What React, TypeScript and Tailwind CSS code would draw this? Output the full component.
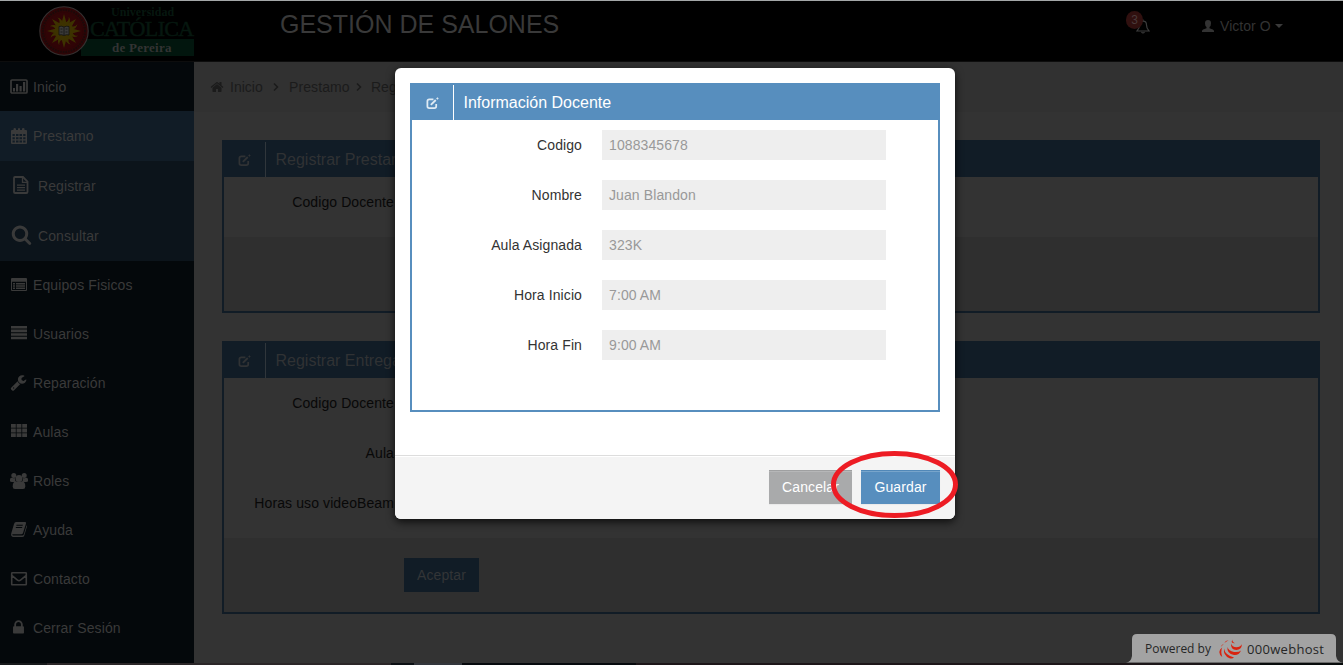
import type { ReactNode } from "react";

const P = {
  home: "M1472 992v480q0 26-19 45t-45 19h-384v-384h-256v384h-384q-26 0-45-19t-19-45v-480q0-1 .5-3t.5-3l575-474 575 474q1 2 1 6zm223-69l-62 74q-8 9-21 11h-3q-13 0-21-7l-692-577-692 577q-12 8-24 7-13-2-21-11l-62-74q-8-10-7-23.5t11-21.5l719-599q32-26 76-26t76 26l244 204v-195q0-14 9-23t23-9h192q14 0 23 9t9 23v408l219 182q10 8 11 21.5t-7 23.5z",
  search: "M1216 832q0-185-131.5-316.5t-316.5-131.5-316.5 131.5-131.5 316.5 131.5 316.5 316.5 131.5 316.5-131.5 131.5-316.5zm512 832q0 52-38 90t-90 38q-54 0-90-38l-343-342q-179 124-399 124-143 0-273.5-55.5t-225-150-150-225-55.5-273.5 55.5-273.5 150-225 225-150 273.5-55.5 273.5 55.5 225 150 150 225 55.5 273.5q0 220-124 399l343 343q37 37 37 90z",
  wrench: "M448 1472q0-26-19-45t-45-19-45 19-19 45 19 45 45 19 45-19 19-45zm644-420l-682 682q-37 37-90 37-52 0-91-37l-106-108q-38-36-38-90 0-53 38-91l681-681q39 98 114.5 173.5t173.5 114.5zm634-435q0 39-23 106-47 134-164.5 217.5t-258.5 83.5q-185 0-316.5-131.5t-131.5-316.5 131.5-316.5 316.5-131.5q58 0 121.5 16.5t107.5 46.5q16 11 16 28t-16 28l-293 169v224l193 107q5-3 79-48.5t135.5-81 70.5-35.5q15 0 23.5 10t8.5 25z",
  lock: "M640 768h512v-192q0-106-75-181t-181-75-181 75-75 181v192zm832 96v576q0 40-28 68t-68 28h-960q-40 0-68-28t-28-68v-576q0-40 28-68t68-28h32v-192q0-184 132-316t316-132 316 132 132 316v192h32q40 0 68 28t28 68z",
};

function Fa({ d, className }: { d: string; className: string }) {
  return (
    <svg viewBox="0 0 1792 1792" fill="currentColor" className={className}>
      <path d={d} />
    </svg>
  );
}

function Icon({ children, className = "w-[18px] h-4" }: { children: ReactNode; className?: string }) {
  return (
    <svg viewBox="0 0 18 16" fill="currentColor" className={className}>
      {children}
    </svg>
  );
}

const barChart = (
  <Icon>
    <rect x="1" y="1" width="16" height="13" rx="1" fill="none" stroke="currentColor" strokeWidth="1.700" />
    <path d="M3 9h2v3.500H3zM6 5h2.200v7.500H6zM9.500 7h2.200v5.500H9.500zM13 3h2.200v9.500H13z" />
  </Icon>
);
const calendar = (
  <Icon>
    <path
      fillRule="evenodd"
      d="M2 2h1.500V1Q3.500 0 4.700 0T6 1v1h2V1q0-1 1-1t1 1v1h2V1q0-1 1.300-1t1.200 1v1H16q1 0 1 1v12q0 1-1 1H2q-1 0-1-1V3q0-1 1-1zM2.500 6v2h2.300V6zm3.500 0v2h2.500V6zm3.500 0v2H12V6zm3.700 0v2h2.300V6zM2.500 9.300v2h2.300v-2zm3.500 0v2h2.500v-2zm3.500 0v2H12v-2zm3.700 0v2h2.300v-2zM2.500 12.500v2h2.300v-2zm3.500 0v2h2.500v-2zm3.500 0v2H12v-2zm3.700 0v2h2.300v-2z"
    />
  </Icon>
);
const fileText = (
  <svg viewBox="0 0 16 18" className="w-4 h-[18px] ml-[3px]" fill="none" stroke="currentColor" strokeWidth="1.800">
    <path d="M2 1h8l4.500 4.500V16q0 1-1 1H2q-1 0-1-1V2q0-1 1-1z" />
    <path d="M9.500 1v5.300h5M4 9.200h8M4 11.700h8M4 14.100h8" strokeWidth="1.300" />
  </svg>
);
const listAlt = (
  <Icon>
    <path fillRule="evenodd" d="M2 1h14q1 0 1 1v11q0 1-1 1H2q-1 0-1-1V2q0-1 1-1zm0 3.800V13h14V4.800zM3 6h2v1.400H3zm3 0h9v1.400H6zM3 8.300h2v1.400H3zm3 0h9v1.400H6zM3 10.600h2V12H3zm3 0h9V12H6z" />
  </Icon>
);
const justify = (
  <Icon>
    <path d="M1 0h16v2.600H1zM1 3.600h16v2.600H1zM1 7.200h16v2.600H1zM1 10.800h16v2.400H1z" />
  </Icon>
);
const grid = (
  <Icon>
    <path d="M1 0h4.800v3.800H1zM6.600 0h4.800v3.800H6.600zM12.200 0H17v3.800h-4.800zM1 4.600h4.800v3.800H1zM6.600 4.600h4.800v3.800H6.600zM12.200 4.600H17v3.800h-4.800zM1 9.200h4.800V13H1zM6.600 9.200h4.800V13H6.600zM12.200 9.200H17V13h-4.800z" />
  </Icon>
);
const users = (
  <Icon>
    <circle cx="3.800" cy="2.500" r="2.500" />
    <circle cx="14.200" cy="2.500" r="2.500" />
    <circle cx="9" cy="5.500" r="3.500" />
    <path d="M0 8V6.500Q0 4.800 1.500 4.800q2.300.8 3.500.2-.3 2.400 1 4H2Q0 9 0 8z" />
    <path d="M18 8V6.500q0-1.700-1.500-1.700-2.300.8-3.500.2.300 2.400-1 4h4q2 0 2-1z" />
    <path d="M5.800 8.500h6.400q3.100 0 3.100 5 0 2.500-2.300 2.500H5q-2.300 0-2.300-2.500 0-5 3.100-5z" />
  </Icon>
);
const book = (
  <Icon>
    <path
      fillRule="evenodd"
      d="M6 0h9q1.400 0 1 1.400l-3 9.600q-.4 1.300-1.800 1.300H2.800q-.6 0-.6.500.2.800 1.200.8h8.800q1.300 0 1.700-1.300l2.700-9q.6.600.3 1.500l-2.600 8.700Q13.800 15 12.200 15H3.400Q.6 15 1.200 11.600L4 2q.6-2 2-2zm.6 2.700-.3 1h6.300l.3-1zM6 5.100l-.3 1H12l.3-1z"
    />
  </Icon>
);
const envelope = (
  <Icon>
    <path d="M2.300 1.800h13.400q.6 0 .6.600v10.800q0 .6-.6.600H2.300q-.6 0-.6-.6V2.400q0-.6.600-.6zM1.800 4.400l5.700 4.700q1.500 1.200 3 0l5.700-4.700" fill="none" stroke="currentColor" strokeWidth="1.600" />
  </Icon>
);

function Edit({ className }: { className: string }) {
  return (
    <svg viewBox="0 0 14 14" fill="none" stroke="currentColor" className={className}>
      <path d="M8 2.500H3.500q-2 0-2 2v5.500q0 2 2 2h5.500q2 0 2-2V7.500" strokeWidth="1.900" />
      <path d="M5.200 8.500l5.300-5.300" strokeWidth="2" />
      <path d="M11.600 2.300l1.400-1.400" strokeWidth="1.900" />
    </svg>
  );
}

function Logo() {
  const rays = Array.from({ length: 16 }, (_, i) => i * 22.5);
  return (
    <div className="flex w-[155px] h-[50px] ml-[39px] mt-[5px] shrink-0">
      <svg viewBox="0 0 50 50" className="relative z-10 w-[50px] h-[50px] shrink-0">
        <circle cx="25" cy="25" r="24.200" fill="#2d0506" stroke="#363030" strokeWidth="1.100" />
        <circle cx="25" cy="25" r="21" fill="none" stroke="#1a0a0a" strokeWidth="2" strokeDasharray="1.500 1.200" />
        <circle cx="25" cy="25" r="18.500" fill="#300406" />
        {rays.map((r, i) => (
          <path key={r} d={i % 2 ? "M23 17Q26 14 24 10Q28 13 27 18z" : "M22.500 17L25 8L27.500 17z"} fill="#3d3200" transform={`rotate(${r} 25 25)`} />
        ))}
        <circle cx="25" cy="25" r="9.500" fill="#3d3200" />
        <path d="M20 20.500q2.500-.8 5 .5 2.500-1.300 5-.5v8.500q-2.500-.8-5 .5-2.500-1.300-5-.5z" fill="#3a3a38" stroke="#111" strokeWidth=".8" />
        <path d="M25 21v8M21.500 23h2M21.500 26h2M26.500 23h2M26.500 26h2" stroke="#111" strokeWidth=".8" />
      </svg>
      <div className="flex flex-col w-[105px] font-['Liberation_Serif',serif] text-[#06170f] whitespace-nowrap">
        <span className="h-[12px] pl-[22px] text-[12px] leading-[12px] font-bold tracking-[0.05px]">Universidad</span>
        <span className="h-[21px] pl-px text-[22px] leading-[21px] tracking-[-0.65px] [-webkit-text-stroke:0.5px_#06170f]">CATÓLICA</span>
        <span className="h-[17px] -ml-2 pl-[31px] bg-[#02160e] text-[#333] text-[13px] leading-[17px] font-bold tracking-[0.25px]">de Pereira</span>
      </div>
    </div>
  );
}

function Item({ icon, label, className = "h-[49px]" }: { icon: ReactNode; label: string; className?: string }) {
  return (
    <a className={`flex items-center pl-[10px] shrink-0 ${className}`}>
      <span className="w-[23px] flex">{icon}</span>
      <span>{label}</span>
    </a>
  );
}

function PanelHead({ title }: { title: string }) {
  return (
    <div className="flex h-[35px] text-base bg-[#111c26] text-[#303234]">
      <span className="w-[42px] border-r border-[#30363b] flex items-center justify-center shrink-0 pt-[2px]">
        <Edit className="w-[13px] h-[13px]" />
      </span>
      <span className="pl-[9.500px] leading-[34px] pt-px">{title}</span>
    </div>
  );
}

function Label({ children }: { children: ReactNode }) {
  return <div className="h-[50px] w-[170px] pt-[5px] leading-10 text-right text-[#080808] whitespace-nowrap tracking-[0.1px]">{children}</div>;
}

const fields = [
  ["Codigo", "1088345678"],
  ["Nombre", "Juan Blandon"],
  ["Aula Asignada", "323K"],
  ["Hora Inicio", "7:00 AM"],
  ["Hora Fin", "9:00 AM"],
];

function Modal() {
  return (
    <div className="absolute z-20 left-[395px] top-[68px] w-[560px] h-[451px] rounded-[6px] bg-white shadow-[0_3px_9px_rgba(0,0,0,0.75)] flex flex-col">
      <div className="h-[387px] p-[15px]">
        <div className="h-[329px] border-2 border-[#578ebe]">
          <div className="flex h-[35px] bg-[#578ebe] text-white text-base">
            <span className="w-[42px] border-r border-white flex items-center justify-center text-[#dfebf4] pt-[2px]">
              <Edit className="w-[13px] h-[13px]" />
            </span>
            <span className="pl-[9.500px] leading-[34px] pt-px">Información Docente</span>
          </div>
          <div className="flex flex-col gap-5 pt-[10px]">
            {fields.map(([k, v]) => (
              <div key={k} className="flex h-[30px] leading-[30px] tracking-[0.1px]">
                <label className="w-[170px] text-right text-[#333]">{k}</label>
                <div className="ml-5 w-[284px] bg-[#eee] pl-[7px] text-[#999]">{v}</div>
              </div>
            ))}
          </div>
        </div>
      </div>
      <div className="flex-1 border-t border-[#ddd] bg-[#f4f4f4] rounded-b-[6px] shadow-[inset_0_1px_0_#fff] flex justify-end gap-[9px] pr-[15px] pt-[14px] text-white leading-[34px] text-center tracking-[0.1px]">
        <button className="w-[83px] h-[34px] bg-[#a9aaab] shadow-[inset_0_1px_0_#9fa0a1,inset_0_2px_0_#b6b7b8,0_1px_1px_#eaeaea]">Cancelar</button>
        <button className="w-[79px] h-[34px] bg-[#578ebe] shadow-[inset_0_1px_0_#5188b8,inset_0_2px_0_#78a5cb,0_1px_1px_#eaeaea]">Guardar</button>
      </div>
      <svg viewBox="0 0 128 70" className="absolute left-[435px] top-[381px] w-[128px] h-[70px]">
        <ellipse cx="64.500" cy="35.500" rx="61" ry="31" fill="none" stroke="#ed1c24" strokeWidth="5" />
      </svg>
    </div>
  );
}

function HostBadge() {
  return (
    <div className="absolute left-[1126px] top-[634px] w-[217px] h-[29px] font-['Open_Sans',sans-serif]">
      <svg viewBox="0 0 217 29" className="absolute inset-0 w-[217px] h-[29px]">
        <path d="M0 28.500Q5 28 6 22V5q0-5 5-5h194q5 0 5 5v17q1 6 7 6.500z" fill="#a3a3a3" />
      </svg>
      <div className="relative flex items-center h-[29px] pl-[19px] text-[#262626] whitespace-nowrap">
        <span className="text-[12px] w-[74px]">Powered by</span>
        <svg viewBox="0 0 24 20" className="w-6 h-5" fill="#d9230f">
          <path d="M12 4.500q1 3.500 5.500 3.700 3.500 0 5.500-3-.5 5.600-5.700 5.800Q11.500 10.500 12 4.500z" />
          <path d="M8.500 8q1 4 6.500 5 5 .5 7-1.500-2 5-7 4.500Q7.500 14.500 8.500 8z" />
          <path d="M5 9.500q1 6.500 10 9-1.500 1.500-4.500.7Q4 16.500 5 9.500z" />
          <path d="M3.200 8.500Q1.500 12 3.200 18 .5 16.500.3 13 .500 10 3.200 8.500zM13.500.5q-.7 2.300 2.500 3.800Q11 4.500 13.500.5zM9.500 1.300Q6.500 1.500 5.300 4zM5 4.700Q2.500 5.500 1.700 8z" />
        </svg>
        <span className="text-[13px] ml-[4px] font-medium tracking-[0.3px]">000webhost</span>
      </div>
    </div>
  );
}

export default function App() {
  return (
    <div className="relative w-[1343px] h-[665px] overflow-hidden bg-[#333] flex flex-col text-[14px] leading-5 font-['Liberation_Sans',Arial,sans-serif]">
      <header className="flex h-[62px] shrink-0 bg-black border-t border-t-[#a4a7a8] border-b border-b-[#0d0d0d] text-[#333]">
        <Logo />
        <h1 className="ml-[86px] text-[25px] leading-[46px] w-[846px] text-[#393939] whitespace-nowrap">GESTIÓN DE SALONES</h1>
        <div className="relative w-[26px] mt-[18px] h-[18px]">
          <svg viewBox="0 0 14 15" className="absolute left-[10px] top-0 w-[14px] h-[15px]" fill="none" stroke="#3c3c3c" strokeWidth="1.200">
            <path d="M1 12Q3.500 9.500 3.500 6 3.500 2.200 7 2.200T10.500 6q0 3.500 2.500 6zM7 .5v1.700M5.500 13q1.500 2 3 0" />
          </svg>
          <span className="absolute left-0 -top-[8px] w-[17px] h-[18px] rounded-full bg-[#30100f] text-[#4a3a3a] text-[12px] leading-[18px] text-center">3</span>
        </div>
        <div className="flex items-center ml-[50px] h-[50px]">
          <svg viewBox="0 0 12 12" className="w-3 h-3" fill="currentColor">
            <path d="M6 0q3 0 3 3.300Q9 6 7.500 7v1.200Q12 9.500 12 11v1H0v-1q0-1.500 4.500-2.800V7Q3 6 3 3.300 3 0 6 0z" />
          </svg>
          <span className="ml-[6px] tracking-[0.05px]">Victor O</span>
          <span className="ml-[4px] border-x-4 border-x-transparent border-t-4 border-t-[#3a3a3a]" />
        </div>
      </header>
      <div className="flex h-[601px] shrink-0">
        <nav className="w-[194px] bg-[#04080b] text-[#3a3a3a] flex flex-col tracking-[0.1px]">
          <Item icon={barChart} label="Inicio" />
          <Item icon={calendar} label="Prestamo" className="h-[50px] bg-[#111c26]" />
          <div className="h-[100px] bg-[#0c141b] flex flex-col">
            <a className="h-[50px] flex items-center pl-[10px]">
              <span className="w-7 flex pb-[3px]">{fileText}</span>
              Registrar
            </a>
            <a className="h-[50px] flex items-center pl-[10px]">
              <span className="w-7 flex pb-[3px]">
                <Fa d={P.search} className="w-[21px] h-[21px] ml-px" />
              </span>
              Consultar
            </a>
          </div>
          <Item icon={listAlt} label="Equipos Fisicos" className="h-12" />
          <Item icon={justify} label="Usuarios" />
          <Item icon={<Fa d={P.wrench} className="w-[17px] h-[17px]" />} label="Reparación" />
          <Item icon={grid} label="Aulas" />
          <Item icon={users} label="Roles" />
          <Item icon={book} label="Ayuda" />
          <Item icon={envelope} label="Contacto" />
          <Item icon={<Fa d={P.lock} className="w-[17px] h-[17px]" />} label="Cerrar Sesión" />
        </nav>
        <main className="flex-1 flex flex-col">
          <div className="flex h-[50px] shrink-0 items-center pl-4 bg-[#313131] text-[#1b1b1b]">
            <Fa d={P.home} className="w-[14px] h-[14px]" />
            <span className="ml-[6px] w-[43px]">Inicio</span>
            <svg viewBox="0 0 6 8" className="w-[6px] h-2 mr-[10px]" fill="none" stroke="currentColor" strokeWidth="1.500"><path d="M1 .5L4.500 4 1 7.500" /></svg>
            <span className="w-[67px] tracking-[0.1px]">Prestamo</span>
            <svg viewBox="0 0 6 8" className="w-[6px] h-2 mr-[9px]" fill="none" stroke="currentColor" strokeWidth="1.500"><path d="M1 .5L4.500 4 1 7.500" /></svg>
            <span>Registrar</span>
          </div>
          <section className="ml-7 mt-7 w-[1098px] h-[173px] shrink-0 border-2 border-[#111c26] flex flex-col">
            <PanelHead title="Registrar Prestamo" />
            <div className="h-[60px]">
              <Label>Codigo Docente</Label>
            </div>
            <div className="flex-1 bg-[#2f2f2f]" />
          </section>
          <section className="ml-7 mt-7 w-[1098px] h-[273px] shrink-0 border-2 border-[#111c26] flex flex-col">
            <PanelHead title="Registrar Entrega" />
            <div className="h-[160px]">
              <Label>Codigo Docente</Label>
              <Label>Aula</Label>
              <Label>Horas uso videoBeam</Label>
            </div>
            <div className="flex-1 bg-[#2f2f2f] pt-5 pl-[180px]">
              <button className="w-[75px] h-[34px] bg-[#111c26] text-[#333537] tracking-[0.1px]">Aceptar</button>
            </div>
          </section>
        </main>
      </div>
      <footer className="flex h-[2px] shrink-0 bg-[#1b1518]">
        <span className="w-[47px] bg-[#17191b]" />
        <span className="w-[344px] bg-[#2b2628]" />
        <span className="w-[23px] bg-[#0c1014]" />
        <span className="w-12 bg-[#33363c]" />
        <span className="w-[174px] bg-[#070a0e]" />
        <span className="w-[624px] bg-[#1d1619]" />
        <span className="flex-1 bg-[#080c0c]" />
      </footer>
      <Modal />
      <HostBadge />
    </div>
  );
}
